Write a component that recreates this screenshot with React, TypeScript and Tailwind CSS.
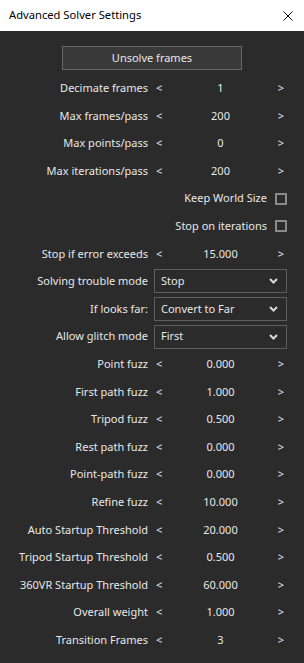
import React from "react";

type Row =
  | { kind: "step"; label: string; value: string }
  | { kind: "check"; label: string }
  | { kind: "select"; label: string; value: string };

const rows: Row[] = [
  { kind: "step", label: "Decimate frames", value: "1" },
  { kind: "step", label: "Max frames/pass", value: "200" },
  { kind: "step", label: "Max points/pass", value: "0" },
  { kind: "step", label: "Max iterations/pass", value: "200" },
  { kind: "check", label: "Keep World Size" },
  { kind: "check", label: "Stop on iterations" },
  { kind: "step", label: "Stop if error exceeds", value: "15.000" },
  { kind: "select", label: "Solving trouble mode", value: "Stop" },
  { kind: "select", label: "If looks far:", value: "Convert to Far" },
  { kind: "select", label: "Allow glitch mode", value: "First" },
  { kind: "step", label: "Point fuzz", value: "0.000" },
  { kind: "step", label: "First path fuzz", value: "1.000" },
  { kind: "step", label: "Tripod fuzz", value: "0.500" },
  { kind: "step", label: "Rest path fuzz", value: "0.000" },
  { kind: "step", label: "Point-path fuzz", value: "0.000" },
  { kind: "step", label: "Refine fuzz", value: "10.000" },
  { kind: "step", label: "Auto Startup Threshold", value: "20.000" },
  { kind: "step", label: "Tripod Startup Threshold", value: "0.500" },
  { kind: "step", label: "360VR Startup Threshold", value: "60.000" },
  { kind: "step", label: "Overall weight", value: "1.000" },
  { kind: "step", label: "Transition Frames", value: "3" },
];

function Chevron() {
  return (
    <svg width="9" height="6" viewBox="0 0 9 6" className="shrink-0">
      <path d="M1 1 L4.5 4.5 L8 1" fill="none" stroke="#d8d8d8" strokeWidth="2" />
    </svg>
  );
}

function RowView({ row }: { row: Row }) {
  if (row.kind === "check") {
    return (
      <div className="h-[27.6px] flex items-center justify-end pr-[17px]">
        <span className="mr-[8px]">{row.label}</span>
        <span className="w-[12px] h-[12px] border-2 border-[#8a8a8a] box-border" />
      </div>
    );
  }
  return (
    <div className="h-[27.6px] grid grid-cols-[148px_133px] gap-x-[6px] items-center">
      <span className="text-right whitespace-nowrap">{row.label}</span>
      {row.kind === "step" ? (
        <div className="flex items-center">
          <span className="w-[12px] pl-[2px] text-[11px]">&lt;</span>
          <span className="flex-1 text-center">{row.value}</span>
          <span className="w-[12px] pr-[3px] text-[11px] text-right">&gt;</span>
        </div>
      ) : (
        <div className="h-[24px] border border-[#5e5e5e] flex items-center justify-between pl-[6px] pr-[8px]">
          <span>{row.value}</span>
          <Chevron />
        </div>
      )}
    </div>
  );
}

export default function App() {
  return (
    <div
      className="w-[304px] h-[663px] bg-[#2b2b2b] flex flex-col text-[11px] text-[#e8e8e8] overflow-hidden"
      style={{ fontFamily: '"Noto Sans", "Open Sans", sans-serif' }}
    >
      <div className="h-[31px] bg-white flex items-center justify-between pl-[9px] pr-[11px] text-black text-[11.2px]">
        <span>Advanced Solver Settings</span>
        <svg width="10" height="10" viewBox="0 0 10 10">
          <path d="M0.5 0.5 L9.5 9.5 M9.5 0.5 L0.5 9.5" stroke="#111" strokeWidth="1" />
        </svg>
      </div>
      <div className="flex justify-center pt-[15px]">
        <div className="w-[180px] h-[24px] bg-[#393939] border border-[#6a6a6a] flex items-center justify-center">
          Unsolve frames
        </div>
      </div>
      <div className="pt-[4.5px]">
        {rows.map((r, i) => (
          <RowView key={i} row={r} />
        ))}
      </div>
    </div>
  );
}
